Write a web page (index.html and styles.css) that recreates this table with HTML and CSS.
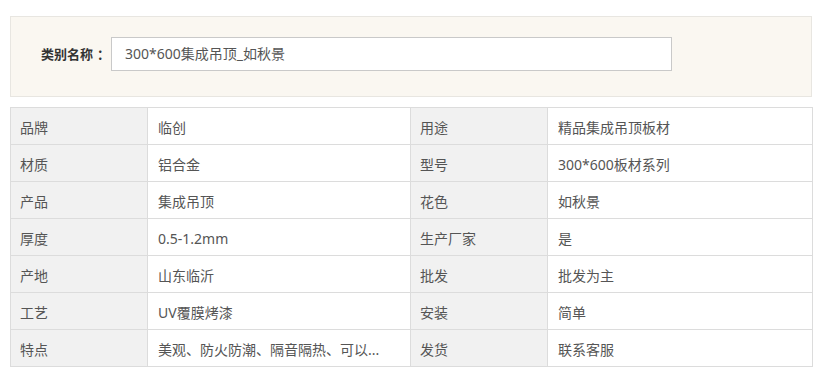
FILE: index.html
```html
<!DOCTYPE html>
<html lang="zh-CN">
<head>
<meta charset="utf-8">
<title>产品参数</title>
<link rel="stylesheet" href="styles.css">
</head>
<body>
<div class="page">
  <div class="cat-panel">
    <label class="cat-label">类别名称<span class="colon">：</span></label>
    <div class="cat-input">300*600集成吊顶_如秋景</div>
  </div>
  <table class="spec">
    <colgroup>
      <col class="c-k"><col class="c-v"><col class="c-k"><col class="c-v2">
    </colgroup>
    <tbody>
      <tr><td class="k">品牌</td><td>临创</td><td class="k">用途</td><td>精品集成吊顶板材</td></tr>
      <tr><td class="k">材质</td><td>铝合金</td><td class="k">型号</td><td>300*600板材系列</td></tr>
      <tr><td class="k">产品</td><td>集成吊顶</td><td class="k">花色</td><td>如秋景</td></tr>
      <tr><td class="k">厚度</td><td>0.5-1.2mm</td><td class="k">生产厂家</td><td>是</td></tr>
      <tr><td class="k">产地</td><td>山东临沂</td><td class="k">批发</td><td>批发为主</td></tr>
      <tr><td class="k">工艺</td><td>UV覆膜烤漆</td><td class="k">安装</td><td>简单</td></tr>
      <tr><td class="k">特点</td><td>美观、防火防潮、隔音隔热、可以...</td><td class="k">发货</td><td>联系客服</td></tr>
    </tbody>
  </table>
</div>
</body>
</html>
```
FILE: styles.css
```css
html, body {
  margin: 0;
  padding: 0;
  background: #fff;
}
body {
  font-family: "Noto Sans", "Noto Sans CJK SC", sans-serif;
  color: #555;
}
.page {
  padding: 16px 13px 0 10px;
}
.cat-panel {
  display: flex;
  align-items: center;
  background: #faf7f1;
  border: 1px solid #e8e6e1;
  padding: 20px 0 25px 30px;
}
.cat-label {
  font-size: 13px;
  font-weight: bold;
  color: #333;
  width: 70px;
  line-height: 20px;
  font-family: "Noto Sans CJK SC", sans-serif;
}
.colon {
  font-family: "Noto Sans CJK TC", "Noto Sans CJK SC", sans-serif;
  margin-left: 4px;
}
.cat-input {
  box-sizing: border-box;
  width: 561px;
  height: 34px;
  border: 1px solid #c9c9c9;
  background: #fff;
  font-size: 14px;
  line-height: 32px;
  padding-left: 13px;
  color: #555;
}
.spec {
  margin-top: 10px;
  width: 802px;
  border-collapse: collapse;
  table-layout: fixed;
  font-size: 14px;
}
.c-k { width: 137px; }
.c-v { width: 263px; }
.c-v2 { width: 265px; }
.spec td {
  border: 1px solid #dcdcdc;
  height: 37px;
  padding: 2px 0 0 9px;
  box-sizing: border-box;
  vertical-align: middle;
  color: #555;
  white-space: nowrap;
  overflow: hidden;
}
.spec td.k {
  background: #f1f1f1;
}
.spec td:not(.k) {
  padding-left: 10px;
}
```
